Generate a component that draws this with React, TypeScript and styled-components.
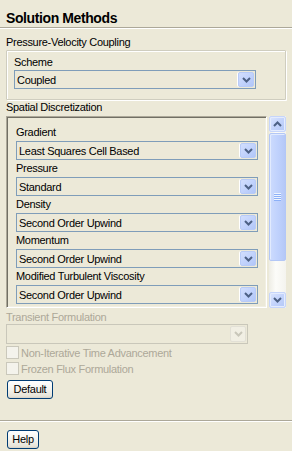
import React from "react";
import styled, { createGlobalStyle } from "styled-components";

const Global = createGlobalStyle`
  html, body { margin: 0; padding: 0; background: #ece9d8; }
  body {
    font-family: "Liberation Sans", Arial, sans-serif;
    font-size: 11px;
    letter-spacing: -0.3px;
    color: #000;
  }
  * { box-sizing: border-box; }
`;

const Window = styled.div`
  width: 292px;
  height: 451px;
  display: flex;
  flex-direction: column;
  background: #ece9d8;
  overflow: hidden;
`;

const Title = styled.div`
  box-sizing: content-box;
  height: 17px;
  padding: 10px 0 0 6px;
  border-bottom: 1px solid #aca899;
  box-shadow: 0 1px 0 #fff;
  font-size: 14px;
  font-weight: bold;
  line-height: 17px;
  letter-spacing: -0.4px;
`;

const Body = styled.div`
  flex: 1;
  display: flex;
  flex-direction: column;
  padding: 7px 6px 0 6px;
`;

const SectionLabel = styled.div<{ $disabled?: boolean; $mt?: number }>`
  line-height: 14px;
  height: 14px;
  margin-top: ${(p) => p.$mt ?? 0}px;
  color: ${(p) => (p.$disabled ? "#aca899" : "#000")};
`;

const GroupBox = styled.div`
  margin-top: 1px;
  width: 280px;
  border: 1px solid #cfcdbf;
  box-shadow: inset 1px 1px 0 #fff, 1px 1px 0 #fff;
  border-radius: 1px;
  padding: 3px 0 10px 7px;
`;

const FieldLabel = styled.div<{ $tall?: boolean }>`
  line-height: ${(p) => (p.$tall ? 17 : 16)}px;
  height: ${(p) => (p.$tall ? 17 : 16)}px;
`;

const Select = styled.div<{ $disabled?: boolean; $h: number }>`
  width: 242px;
  height: ${(p) => p.$h}px;
  border: 1px solid ${(p) => (p.$disabled ? "#c9c7ba" : "#7f9db9")};
  background: #ece9d8;
  display: flex;
`;

const SelectText = styled.div`
  flex: 1;
  padding-left: 2px;
  display: flex;
  align-items: center;
  white-space: nowrap;
`;

const ArrowButton = styled.div<{ $disabled?: boolean }>`
  width: 16px;
  margin: 1px;
  border-radius: 2px;
  border: 1px solid ${(p) => (p.$disabled ? "#e2e0d6" : "#b8cbf7")};
  background: ${(p) =>
    p.$disabled
      ? "#f1efe4"
      : "linear-gradient(135deg, #d2defd 0%, #c2d3fc 50%, #b1c6f8 100%)"};
  box-shadow: -1px 0 0 ${(p) => (p.$disabled ? "#ece9d8" : "#fff")};
  display: flex;
  align-items: center;
  justify-content: center;
`;

const PaneRow = styled.div`
  margin-top: 2px;
  display: flex;
  gap: 2px;
  height: 192px;
`;

const Pane = styled.div`
  width: 262px;
  height: 192px;
  overflow: hidden;
  border: 1px solid;
  border-color: #aca899 #fff #fff #aca899;
  box-shadow: inset 1px 1px 0 #716f64, inset -1px -1px 0 #f1efe2;
  padding: 7px 0 0 9px;
`;

const ScrollBar = styled.div`
  width: 17px;
  height: 192px;
  display: flex;
  flex-direction: column;
  background: linear-gradient(to right, #eeede5, #fcfcf9 40%, #f4f3ee);
`;

const ScrollButton = styled.div`
  height: 16px;
  border: 1px solid #c6d5fb;
  border-radius: 2px;
  background: linear-gradient(135deg, #dbe5fe 0%, #c4d4fc 50%, #b4c8f7 100%);
  box-shadow: inset 0 0 0 1px #e4ecfe;
  display: flex;
  align-items: center;
  justify-content: center;
`;

const Thumb = styled.div`
  margin-top: 1px;
  height: 128px;
  border: 1px solid #b3c7f6;
  border-radius: 2px;
  background: linear-gradient(to right, #cddbfd 0%, #c0d2fd 50%, #b5c8f7 100%);
  box-shadow: inset 1px 1px 0 #e2ebfe;
  display: flex;
  flex-direction: column;
  align-items: center;
  justify-content: center;
`;

const GripLine = styled.div<{ $light: boolean }>`
  width: 7px;
  height: 1px;
  background: ${(p) => (p.$light ? "#eef4fe" : "#8cb0f8")};
`;

const TrackFill = styled.div`
  flex: 1;
`;

const CheckRow = styled.div<{ $mt?: number }>`
  display: flex;
  align-items: flex-start;
  gap: 2px;
  height: 16px;
  line-height: 16px;
  margin-top: ${(p) => p.$mt ?? 0}px;
  color: #aca899;
`;

const CheckBox = styled.div`
  margin-top: 1px;
  width: 13px;
  height: 13px;
  border: 1px solid #cac8bb;
  background: #f4f3ec;
`;

const Button = styled.div<{ $w: number; $ml?: number }>`
  width: ${(p) => p.$w}px;
  height: 19px;
  margin-left: ${(p) => p.$ml ?? 1}px;
  border: 1px solid #003c74;
  border-radius: 3px;
  background: linear-gradient(#ffffff 0%, #f4f3ee 50%, #e6e3d8 90%, #d6d0c5 100%);
  display: flex;
  align-items: center;
  justify-content: center;
  line-height: 17px;
`;

const DefaultButton = styled(Button)`
  margin-top: 3px;
`;

const Footer = styled.div`
  height: 31px;
  border-top: 1px solid #aca899;
  box-shadow: inset 0 1px 0 #fff;
  padding-top: 9px;
`;

const Chevron: React.FC<{ up?: boolean; color?: string }> = ({ up, color = "#4d6185" }) => (
  <svg width="9" height="6" viewBox="0 0 9 6">
    <polyline
      points={up ? "1,5 4.5,1.5 8,5" : "1,1 4.5,4.5 8,1"}
      fill="none"
      stroke={color}
      strokeWidth="2"
    />
  </svg>
);

const Dropdown: React.FC<{ value?: string; h?: number; disabled?: boolean }> = ({
  value = "",
  h = 19,
  disabled,
}) => (
  <Select $h={h} $disabled={disabled}>
    <SelectText>{value}</SelectText>
    <ArrowButton $disabled={disabled}>
      <Chevron color={disabled ? "#c9c7ba" : "#4d6185"} />
    </ArrowButton>
  </Select>
);

const fields = [
  { label: "Gradient", value: "Least Squares Cell Based" },
  { label: "Pressure", value: "Standard" },
  { label: "Density", value: "Second Order Upwind" },
  { label: "Momentum", value: "Second Order Upwind" },
  { label: "Modified Turbulent Viscosity", value: "Second Order Upwind" },
];

export default function App() {
  return (
    <Window>
      <Global />
      <Title>Solution Methods</Title>
      <Body>
        <SectionLabel>Pressure-Velocity Coupling</SectionLabel>
        <GroupBox>
          <FieldLabel>Scheme</FieldLabel>
          <Dropdown value="Coupled" />
        </GroupBox>
        <SectionLabel>Spatial Discretization</SectionLabel>
        <PaneRow>
          <Pane>
            {fields.map((f) => (
              <React.Fragment key={f.label}>
                <FieldLabel $tall>{f.label}</FieldLabel>
                <Dropdown value={f.value} />
              </React.Fragment>
            ))}
          </Pane>
          <ScrollBar>
            <ScrollButton>
              <Chevron up />
            </ScrollButton>
            <Thumb>
              {[true, false, true, false, true, false, true, false].map((l, i) => (
                <GripLine key={i} $light={l} />
              ))}
            </Thumb>
            <TrackFill />
            <ScrollButton>
              <Chevron />
            </ScrollButton>
          </ScrollBar>
        </PaneRow>
        <SectionLabel $disabled $mt={2}>
          Transient Formulation
        </SectionLabel>
        <Dropdown h={20} disabled />
        <CheckRow $mt={1}>
          <CheckBox />
          Non-Iterative Time Advancement
        </CheckRow>
        <CheckRow>
          <CheckBox />
          Frozen Flux Formulation
        </CheckRow>
        <DefaultButton $w={46}>Default</DefaultButton>
      </Body>
      <Footer>
        <Button $w={32} $ml={7}>
          Help
        </Button>
      </Footer>
    </Window>
  );
}
